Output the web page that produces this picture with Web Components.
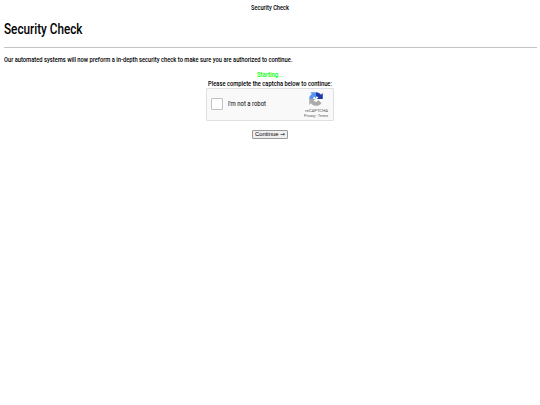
<!DOCTYPE html>
<html lang="en">
<head>
<meta charset="utf-8">
<title>Security Check</title>
<style>
  body {
    margin: 0;
    background: #fff;
    color: #000;
    font-family: Roboto, "Liberation Sans", sans-serif;
  }
</style>
</head>
<body>
<security-page></security-page>

<template id="narrow-text-template">
  <style>
    :host {
      display: block;
      white-space: nowrap;
    }

    span {
      display: inline-block;
      transform-origin: 0 50%;
    }
  </style>
  <span><slot></slot></span>
</template>

<template id="recaptcha-logo-template">
  <style>
    :host {
      display: block;
      width: 14px;
      height: 14px;
    }

    svg {
      display: block;
      width: 100%;
      height: 100%;
    }
  </style>
  <svg viewBox="0 0 64 64">
    <path fill="#1c3aa9" d="M63 32V5l-8 8C50 5 42 1 32 1v19c5 0 8 1 11 5l-8 7z"/>
    <path fill="#5b93f0" d="M32 1H6l7 8C5 14 1 22 1 32h18c0-5 2-8 6-10l7 8z"/>
    <path fill="#ababab" d="M1 32v27l8-8c6 8 14 12 23 12 11 0 19-4 25-12L43 37c-3 6-6 8-11 8-5 0-8-2-10-6l8-7z"/>
  </svg>
</template>

<template id="captcha-box-template">
  <style>
    :host {
      box-sizing: border-box;
      display: flex;
      align-items: center;
      width: 128px;
      height: 33px;
      padding: 0 5px 0 4px;
      background: #f9f9f9;
      border: 1px solid #e0e0e0;
      border-radius: 1px;
    }

    .checkbox {
      box-sizing: border-box;
      width: 12px;
      height: 12px;
      margin: 0 5px 1px 0;
      background: #fff;
      border: 1px solid #c1c1c1;
      border-radius: 1px;
    }

    .label {
      margin: 0 auto 0 0;
      font-size: 6.4px;
    }

    .brand {
      display: flex;
      flex-direction: column;
      align-items: center;
      color: #555;
      font-size: 4.4px;
      line-height: 5px;
    }

    recaptcha-logo {
      margin-bottom: 2px;
    }

    .links {
      font-size: 3.8px;
    }
  </style>
  <div class="checkbox"></div>
  <narrow-text class="label" width="38">I'm not a robot</narrow-text>
  <div class="brand">
    <recaptcha-logo></recaptcha-logo>
    <narrow-text width="23">reCAPTCHA</narrow-text>
    <narrow-text class="links" width="24">Privacy - Terms</narrow-text>
  </div>
</template>

<template id="security-page-template">
  <style>
    :host {
      display: block;
      padding: 3px 3.5px 0;
      font-size: 7.2px;
      font-weight: 500;
      line-height: 9px;
    }

    .title {
      width: 38px;
      margin: 0 auto;
    }

    h1 {
      margin: 9px 0 9px;
      font-size: 14.4px;
      font-weight: 500;
      line-height: 17px;
    }

    hr {
      height: 1px;
      margin: 0 0 7px;
      background: #c4c4c4;
      border: 0;
    }

    .check {
      display: flex;
      flex-direction: column;
      align-items: center;
      margin-top: 7px;
    }

    .status {
      color: #0f0;
      line-height: 8px;
    }

    captcha-box {
      font-weight: 400;
    }

    button {
      box-sizing: border-box;
      display: flex;
      align-items: center;
      justify-content: center;
      width: 36px;
      height: 9px;
      margin: 9px 0 0;
      padding: 0;
      background: #efefef;
      border: 1px solid #999;
      border-radius: 1px;
      color: #000;
      font: 5.8px/7px "Liberation Sans", sans-serif;
    }

    .arrow {
      font-family: "DejaVu Sans", sans-serif;
    }
  </style>
  <narrow-text class="title" width="38">Security Check</narrow-text>
  <h1><narrow-text width="78.5">Security Check</narrow-text></h1>
  <hr>
  <narrow-text width="288.5">Our automated systems will now preform a in-depth security check to make sure you are authorized to continue.</narrow-text>
  <div class="check">
    <narrow-text class="status" width="26">Starting...</narrow-text>
    <narrow-text width="124">Please complete the captcha below to continue:</narrow-text>
    <captcha-box></captcha-box>
    <button><narrow-text width="30">Continue <span class="arrow">→</span></narrow-text></button>
  </div>
</template>

<script>
  function attach(element, id) {
    const template = document.querySelector(id);
    element.attachShadow({ mode: "open" });
    element.shadowRoot.appendChild(template.content.cloneNode(true));
  }

  // Sets a line of text to a fixed width by scaling its letters.
  customElements.define(
    "narrow-text",
    class extends HTMLElement {
      connectedCallback() {
        attach(this, "#narrow-text-template");
        this.fit();
      }

      fit() {
        const span = this.shadowRoot.querySelector("span");
        const width = Number(this.getAttribute("width"));
        const natural = span.getBoundingClientRect().width;
        this.style.width = `${width}px`;
        if (natural > 0) {
          span.style.transform = `scaleX(${width / natural})`;
        }
      }
    }
  );

  customElements.define(
    "recaptcha-logo",
    class extends HTMLElement {
      connectedCallback() {
        attach(this, "#recaptcha-logo-template");
      }
    }
  );

  customElements.define(
    "captcha-box",
    class extends HTMLElement {
      connectedCallback() {
        attach(this, "#captcha-box-template");
      }
    }
  );

  customElements.define(
    "security-page",
    class extends HTMLElement {
      connectedCallback() {
        attach(this, "#security-page-template");
      }
    }
  );
</script>
</body>
</html>
